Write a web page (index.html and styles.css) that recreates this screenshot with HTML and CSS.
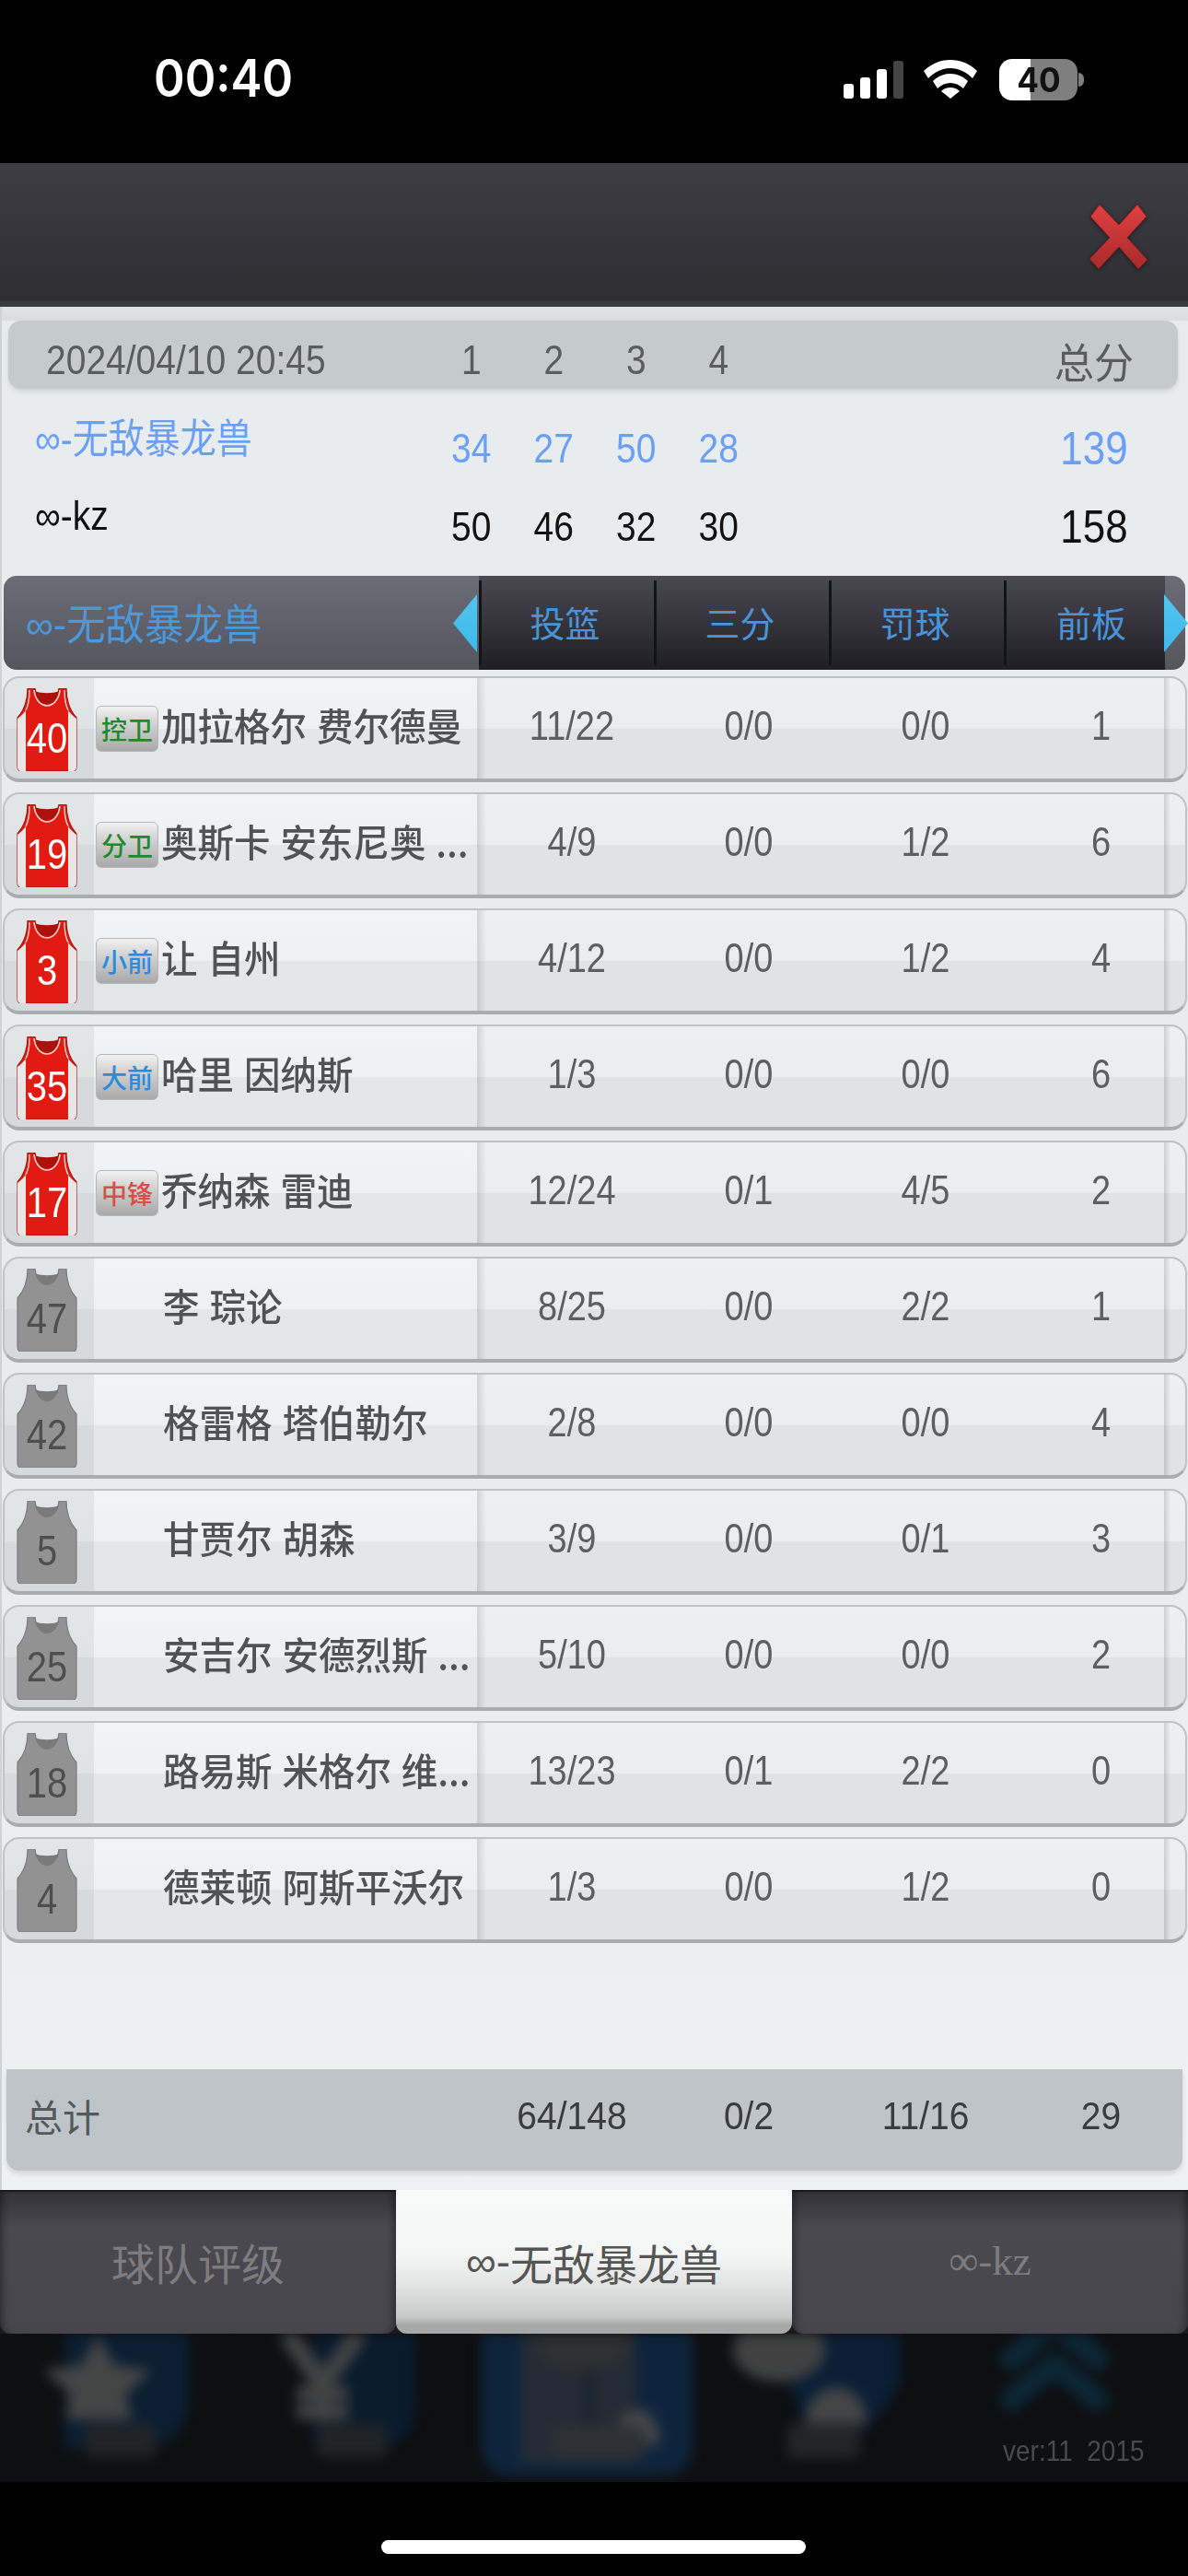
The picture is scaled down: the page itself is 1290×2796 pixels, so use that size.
FILE: index.html
```html
<!DOCTYPE html>
<html lang="zh-CN">
<head>
<meta charset="utf-8">
<title>比赛统计</title>
<link rel="stylesheet" href="styles.css">
</head>
<body>
<svg class="defs" width="0" height="0" aria-hidden="true">
  <defs>
    <symbol id="jersey-red" viewBox="0 0 66 90">
      <path d="M12 0H20C21 10 26 17 33 17C40 17 45 10 46 0H54C54 10 56 22 65 32V85Q65 90 61 90H5Q1 90 1 85V32C10 22 12 10 12 0Z" fill="#e11b12" stroke="#a81510" stroke-width="1.2"/>
      <path d="M1 33C5 30 8 27 10 24V90H5Q1 90 1 85Z M65 33C61 30 58 27 56 24V90H61Q65 90 65 85Z" fill="#e9e6e6"/>
      <path d="M20 3C21 11 26 17 33 17C40 17 45 11 46 3C40 6 26 6 20 3Z" fill="#ab120c"/>
      <path d="M19 2C20 12 26 19 33 19C40 19 46 12 47 2" fill="none" stroke="#f6d5d2" stroke-width="1.6"/>
      <path d="M14 2C14 12 12 20 10 24 M52 2C52 12 54 20 56 24" fill="none" stroke="#f6d5d2" stroke-width="1.4"/>
    </symbol>
    <symbol id="jersey-grey" viewBox="0 0 66 90">
      <path d="M12 0H20C21 10 26 17 33 17C40 17 45 10 46 0H54C54 10 56 22 65 32V85Q65 90 61 90H5Q1 90 1 85V32C10 22 12 10 12 0Z" fill="#929292" stroke="#7b7b7b" stroke-width="1.2"/>
      <path d="M20 5C22 12 27 18 33 18C39 18 44 12 46 5C40 8 26 8 20 5Z" fill="#7a7a7a"/>
    </symbol>
  </defs>
</svg>
<main class="screen">
  <header class="status">
    <span class="clock">00:40</span>
    <div class="status-icons">
      <div class="signal"><i class="b1"></i><i class="b2"></i><i class="b3"></i><i class="b4"></i></div>
      <svg class="wifi" viewBox="0 0 58 42" width="58" height="42"><path d="M0 12C8 4 18 0 29 0C40 0 50 4 58 12L53 20C46 13 38 9 29 9C20 9 12 13 5 20Z M10 23C15 18 22 15 29 15C36 15 43 18 48 23L43 31C39 27 34 25 29 25C24 25 19 27 15 31Z M19 34C22 31 25 30 29 30C33 30 36 31 39 34L29 42Z" fill="#fff"/></svg>
      <div class="battery"><span class="battery-level">40</span></div>
    </div>
  </header>

  <div class="topbar">
    <svg class="close" viewBox="0 0 63 70" width="63" height="70">
      <defs><linearGradient id="xg" x1="0" y1="0" x2="0" y2="1"><stop offset="0" stop-color="#e23f3f"/><stop offset="1" stop-color="#a82a2c"/></linearGradient></defs>
      <path d="M11 0L32 22L52 0L62 13L41 36L63 60L53 70L32 46L10 70L0 59L22 36L1 13Z" fill="url(#xg)" stroke="#7a1f20" stroke-width="1"/>
    </svg>
  </div>

  <section class="panel">
    <div class="score-head score-grid">
      <span class="tx date">2024/04/10 20:45</span>
      <span class="tx c">1</span><span class="tx c">2</span><span class="tx c">3</span><span class="tx c">4</span><span></span>
      <span class="tx c cjk sum-label">总分</span>
    </div>
    <div class="teams">
      <div class="team score-grid blue">
        <span class="tx team-name">∞-<span class="cjk">无敌暴龙兽</span></span>
        <span class="tx c">34</span><span class="tx c">27</span><span class="tx c">50</span><span class="tx c">28</span><span></span>
        <span class="tx c big">139</span>
      </div>
      <div class="team score-grid dark">
        <span class="tx team-name">∞-kz</span>
        <span class="tx c">50</span><span class="tx c">46</span><span class="tx c">32</span><span class="tx c">30</span><span></span>
        <span class="tx c big">158</span>
      </div>
    </div>

    <div class="stat-bar">
      <div class="bar-title tx">∞-<span class="cjk">无敌暴龙兽</span></div>
      <div class="bar-cols">
        <span class="bar-col cjk">投篮</span>
        <span class="bar-col cjk">三分</span>
        <span class="bar-col cjk">罚球</span>
        <span class="bar-col last cjk">前板</span>
      </div>
      <div class="bar-cap"></div>
      <i class="arrow arrow-left"></i>
      <i class="arrow arrow-right"></i>
    </div>

    <div class="players">
      <div class="player">
        <div class="shirt"><svg width="66" height="90"><use href="#jersey-red"/></svg><b class="num tx">40</b></div>
        <div class="who"><span class="badge green">控卫</span><span class="name tx">加拉格尔 费尔德曼</span></div>
        <div class="stats"><span class="tx">11/22</span><span class="tx">0/0</span><span class="tx">0/0</span><span class="tx">1</span></div>
      </div>
      <div class="player">
        <div class="shirt"><svg width="66" height="90"><use href="#jersey-red"/></svg><b class="num tx">19</b></div>
        <div class="who"><span class="badge green">分卫</span><span class="name tx">奥斯卡 安东尼奥 ...</span></div>
        <div class="stats"><span class="tx">4/9</span><span class="tx">0/0</span><span class="tx">1/2</span><span class="tx">6</span></div>
      </div>
      <div class="player">
        <div class="shirt"><svg width="66" height="90"><use href="#jersey-red"/></svg><b class="num tx">3</b></div>
        <div class="who"><span class="badge sky">小前</span><span class="name tx">让 自州</span></div>
        <div class="stats"><span class="tx">4/12</span><span class="tx">0/0</span><span class="tx">1/2</span><span class="tx">4</span></div>
      </div>
      <div class="player">
        <div class="shirt"><svg width="66" height="90"><use href="#jersey-red"/></svg><b class="num tx">35</b></div>
        <div class="who"><span class="badge sky">大前</span><span class="name tx">哈里 因纳斯</span></div>
        <div class="stats"><span class="tx">1/3</span><span class="tx">0/0</span><span class="tx">0/0</span><span class="tx">6</span></div>
      </div>
      <div class="player">
        <div class="shirt"><svg width="66" height="90"><use href="#jersey-red"/></svg><b class="num tx">17</b></div>
        <div class="who"><span class="badge red">中锋</span><span class="name tx">乔纳森 雷迪</span></div>
        <div class="stats"><span class="tx">12/24</span><span class="tx">0/1</span><span class="tx">4/5</span><span class="tx">2</span></div>
      </div>
      <div class="player bench">
        <div class="shirt"><svg width="66" height="90"><use href="#jersey-grey"/></svg><b class="num tx">47</b></div>
        <div class="who"><span class="name tx">李 琮论</span></div>
        <div class="stats"><span class="tx">8/25</span><span class="tx">0/0</span><span class="tx">2/2</span><span class="tx">1</span></div>
      </div>
      <div class="player bench">
        <div class="shirt"><svg width="66" height="90"><use href="#jersey-grey"/></svg><b class="num tx">42</b></div>
        <div class="who"><span class="name tx">格雷格 塔伯勒尔</span></div>
        <div class="stats"><span class="tx">2/8</span><span class="tx">0/0</span><span class="tx">0/0</span><span class="tx">4</span></div>
      </div>
      <div class="player bench">
        <div class="shirt"><svg width="66" height="90"><use href="#jersey-grey"/></svg><b class="num tx">5</b></div>
        <div class="who"><span class="name tx">甘贾尔 胡森</span></div>
        <div class="stats"><span class="tx">3/9</span><span class="tx">0/0</span><span class="tx">0/1</span><span class="tx">3</span></div>
      </div>
      <div class="player bench">
        <div class="shirt"><svg width="66" height="90"><use href="#jersey-grey"/></svg><b class="num tx">25</b></div>
        <div class="who"><span class="name tx">安吉尔 安德烈斯 ...</span></div>
        <div class="stats"><span class="tx">5/10</span><span class="tx">0/0</span><span class="tx">0/0</span><span class="tx">2</span></div>
      </div>
      <div class="player bench">
        <div class="shirt"><svg width="66" height="90"><use href="#jersey-grey"/></svg><b class="num tx">18</b></div>
        <div class="who"><span class="name tx">路易斯 米格尔 维...</span></div>
        <div class="stats"><span class="tx">13/23</span><span class="tx">0/1</span><span class="tx">2/2</span><span class="tx">0</span></div>
      </div>
      <div class="player bench">
        <div class="shirt"><svg width="66" height="90"><use href="#jersey-grey"/></svg><b class="num tx">4</b></div>
        <div class="who"><span class="name tx">德莱顿 阿斯平沃尔</span></div>
        <div class="stats"><span class="tx">1/3</span><span class="tx">0/0</span><span class="tx">1/2</span><span class="tx">0</span></div>
      </div>
    </div>

    <div class="totals">
      <span class="totals-label cjk">总计</span>
      <div class="stats"><span class="tx">64/148</span><span class="tx">0/2</span><span class="tx">11/16</span><span class="tx">29</span></div>
    </div>
  </section>

  <nav class="tabs">
    <div class="tab cjk">球队评级</div>
    <div class="tab active">∞-<span class="cjk">无敌暴龙兽</span></div>
    <div class="tab serif">∞-kz</div>
  </nav>

  <div class="strip">
    <svg class="strip-art" viewBox="0 0 1290 161" width="1290" height="161" aria-hidden="true">
      <path d="M70 -20H205V70Q205 120 150 125H70Z" fill="#0a2540"/>
      <path d="M106 2L125 34L165 40L137 65L143 93H72L76 65L47 40L88 34Z" fill="#5a5a5a"/>
      <rect x="93" y="98" width="76" height="36" rx="6" fill="#2a2c30"/>
      <path d="M340 -20H452V70Q452 120 410 125H340Z" fill="#082038"/>
      <path d="M312 0L350 55L390 0" fill="none" stroke="#585858" stroke-width="20"/>
      <path d="M350 50V95M322 65H378M322 85H378" fill="none" stroke="#585858" stroke-width="16"/>
      <rect x="345" y="98" width="75" height="36" rx="6" fill="#2a2c30"/>
      <rect x="523" y="-30" width="229" height="184" rx="30" fill="#0f2d4d"/>
      <rect x="566" y="-30" width="124" height="170" fill="#2f3742"/>
      <path d="M640 20V130" stroke="#1c2a3a" stroke-width="10"/>
      <path d="M585 -10H680V28Q632 50 585 28Z" fill="#3d3d40"/>
      <path d="M668 120C668 70 716 70 716 120Z" fill="#5e5e61"/>
      <rect x="600" y="100" width="100" height="36" rx="6" fill="#3b3e44"/>
      <path d="M830 -20H978V50Q960 95 900 135L870 90Z" fill="#0a2544"/>
      <ellipse cx="846" cy="18" rx="50" ry="34" fill="#555"/>
      <path d="M875 98C875 45 941 45 941 98Z" fill="#5a5a5a"/>
      <rect x="855" y="97" width="78" height="38" rx="6" fill="#2c2e33"/>
      <path d="M1090 35L1145 -12L1200 35" fill="none" stroke="#0c3146" stroke-width="24"/>
      <path d="M1090 78L1145 34L1200 78" fill="none" stroke="#0c3146" stroke-width="24"/>
    </svg>
    <span class="ver tx">ver:11&nbsp;&nbsp;2015</span>
  </div>

  <footer class="home"><i class="home-bar"></i></footer>
</main>
</body>
</html>
```
FILE: styles.css
```css
* { box-sizing: border-box; }
html, body { margin: 0; padding: 0; background: #000; }
body { width: 1290px; height: 2796px; overflow: hidden; font-family: "Liberation Sans", "Noto Sans CJK SC", sans-serif; }
.defs { position: absolute; }
.screen { display: flex; flex-direction: column; width: 1290px; height: 2796px; }
.cjk { font-family: "Noto Sans CJK SC", "Liberation Sans", sans-serif; }
.tx { display: inline-block; transform: scaleY(1.14); }

/* status bar */
.status { height: 177px; flex: none; background: #000; display: flex; justify-content: space-between; padding: 64px 120px 0 167px; color: #fff; }
.clock { font: 600 51px/48px Inter, "Liberation Sans", sans-serif; transform: scaleY(1.1); }
.status-icons { display: flex; align-items: flex-start; }
.signal { display: flex; align-items: flex-end; gap: 7px; height: 41px; margin-top: 2px; margin-right: 22px; }
.signal i { display: block; width: 11px; background: #fff; border-radius: 3px; }
.signal .b1 { height: 16px; }
.signal .b2 { height: 23px; }
.signal .b3 { height: 32px; }
.signal .b4 { height: 41px; background: #444; }
.wifi { margin-top: 1px; margin-right: 24px; }
.battery { position: relative; width: 85px; height: 45px; border-radius: 14px; background: linear-gradient(90deg, #fff 40%, #7f7f7f 40%); display: flex; align-items: center; justify-content: center; }
.battery::after { content: ""; position: absolute; right: -7px; top: 15px; width: 6px; height: 15px; border-radius: 0 6px 6px 0; background: #7f7f7f; }
.battery-level { font: 700 37px/45px Inter, "Liberation Sans", sans-serif; color: #111; transform: scaleX(.95); }

/* top bar */
.topbar { height: 156px; flex: none; display: flex; justify-content: flex-end; align-items: flex-start; padding: 45px 44px 0 0; background: linear-gradient(#3e3d45, #2f2e33 97%); border-bottom: 6px solid #393d40; }
.close { filter: drop-shadow(0 1px 2px rgba(0,0,0,.5)); }

/* panel */
.panel { height: 2044px; flex: none; display: flex; flex-direction: column; border-left: 2px solid #cfd3d4; padding-top: 15px; background: linear-gradient(#e0e4e5, #d9dddd 15px, #e8ecee 15px, #e8ecee 60%, #edf1f2); }
.score-grid { display: grid; grid-template-columns: 465px repeat(4, 89.5px) 275px 176px; align-items: center; }
.c { justify-self: center; }
.score-head { height: 74px; margin: 0 11px 0 7px; padding-top: 12px; grid-template-columns: 458px repeat(4, 89.5px) 275px 176px; background: #c5cacc; border-radius: 14px; box-shadow: 0 3px 4px rgba(0,0,0,.1); font-size: 39px; color: #5a5c5e; }
.date { padding-left: 41px; justify-self: start; }
.sum-label { font-size: 43px; line-height: 50px; transform: scaleY(1.05); }
.teams { padding-top: 22px; margin-bottom: 11px; }
.team { height: 85px; font-size: 39px; }
.team-name { font-size: 39px; padding-left: 36px; margin-bottom: 24px; justify-self: start; line-height: 44px; }
.team .cjk { font-size: 39px; }
.big { font-size: 44px; }
.blue { color: #6a9ff5; }
.dark { color: #111; }

/* stat bar */
.stat-bar { position: relative; display: flex; height: 102px; margin: 0 3px 7px 2px; flex: none; }
.bar-title { width: 516px; padding: 14px 0 0 24px; background: linear-gradient(#6c6c77, #55555e); border-radius: 14px 0 0 14px; color: #4a98dd; font-size: 42px; line-height: 72px; transform: none; }
.bar-title .cjk { display: inline-block; font-size: 42.5px; transform: scaleY(1.08); }
.bar-cols { display: flex; width: 745px; background: linear-gradient(#4a4952, #1f1e24); padding: 5px 0; }
.bar-col { display: flex; align-items: center; justify-content: center; width: 190px; padding-right: 6px; padding-bottom: 4px; border-left: 3px solid #11131b; color: #4a93d6; font-size: 38px; }
.bar-col.last { width: 175px; padding-right: 0; padding-left: 12px; }
.bar-cap { flex: 1; background: linear-gradient(#6c6c77, #55555e); border-radius: 0 14px 14px 0; }
.arrow { position: absolute; top: 20px; width: 26px; height: 63px; background: linear-gradient(#4fc6ee, #3fb8ec); }
.arrow-left { left: 488px; clip-path: polygon(100% 0, 0 50%, 100% 100%); }
.arrow-right { right: -3px; clip-path: polygon(0 0, 100% 50%, 0 100%); }

/* players */
.players { display: flex; flex-direction: column; gap: 11px; margin: 0 1px; }
.player { position: relative; display: grid; grid-template-columns: 97px 416px 769px; height: 115px; overflow: hidden; border-radius: 18px; border: solid #bfc3c4; border-width: 2px 2px 4px; border-bottom-color: #a8adaf; background: linear-gradient(#f1f4f5, #eef1f2 50%, #e4e7e9 50%, #e4e7e9); }
.player::after { content: ""; position: absolute; right: 0; top: 0; bottom: 0; width: 23px; background: linear-gradient(90deg, rgba(0,0,0,.14), rgba(0,0,0,0) 7px); }
.shirt { position: relative; display: flex; justify-content: center; padding: 11px 5px 0 0; background: rgba(0,0,0,.055); }
.shirt svg { display: block; }
.num { position: absolute; left: 0; right: 5px; top: 40px; text-align: center; font: 400 40px/50px "Liberation Sans", sans-serif; color: #fff; }
.bench .num { color: #4e4e4e; }
.who { display: flex; align-items: center; padding: 0 0 0 2px; }
.badge { flex: none; width: 68px; height: 50px; margin-top: 1px; display: flex; align-items: center; justify-content: center; border-radius: 6px; border: 1px solid #b6b8b8; background: linear-gradient(#f2f2f2, #d8d8d8 30%, #a9a9a9); font: 500 28px/1 "Noto Sans CJK SC", sans-serif; }
.green { color: #1f8a2c; }
.sky { color: #2b8be0; }
.red { color: #e24a4a; }
.name { margin-left: 3px; padding-bottom: 9px; font: 500 39.5px/50px "Noto Sans CJK SC", sans-serif; color: #505355; white-space: nowrap; word-spacing: 2px; transform: scaleY(1.05); }
.bench .name { margin-left: 73px; }
.stats { display: grid; grid-template-columns: 206px 178px 206px 175px; align-items: center; justify-items: center; padding-bottom: 4px; font-size: 38px; color: #5c5e60; background: linear-gradient(90deg, rgba(0,0,0,.13), rgba(0,0,0,.015) 10px); }
.player .stats span { transform: scaleY(1.18); }

/* totals */
.totals { display: flex; height: 110px; margin: auto 6px 21px 5px; background: #bfc4c8; border-radius: 0 0 14px 14px; box-shadow: 0 4px 5px rgba(0,0,0,.1); }
.totals-label { width: 511px; padding: 22px 0 0 20px; font-size: 41px; line-height: 56px; color: #55585a; }
.totals .stats { flex: none; grid-template-columns: 206px 178px 206px 175px; background: none; color: #3a3c3e; font-size: 39px; padding-bottom: 8px; }
.totals .tx { transform: scaleY(1.07); }

/* tabs */
.tabs { height: 156px; flex: none; display: grid; grid-template-columns: 430px 430px 430px; background: #1a1a1e; }
.tab { display: flex; align-items: center; justify-content: center; margin-top: 2px; border-radius: 0 0 12px 12px; background: linear-gradient(#333238, #4a4950 25%, #47464d); color: #7d7d80; font-size: 46px; padding-bottom: 4px; box-shadow: inset 10px 0 10px -8px rgba(0,0,0,.45), inset -10px 0 10px -8px rgba(0,0,0,.45); }
.tab.cjk { font-size: 47px; }
.tab.active { margin-top: 0; background: linear-gradient(#f8faf9, #f4f6f5 45%, #e2e4e3 66%, #c8cac9 88%, #a6a8a7 94%, #a6a8a7); color: #555; box-shadow: none; padding-top: 4px; }
.tab.serif { font-family: "Liberation Serif", serif; font-size: 45px; }

/* blurred background strip */
.strip { position: relative; height: 161px; flex: none; overflow: hidden; background: #0e0f11; }
.strip-art { display: block; filter: blur(7px); opacity: .72; }
.ver { position: absolute; left: 1089px; top: 113px; font-size: 28px; line-height: 30px; color: #4a4a4c; white-space: nowrap; transform: scaleY(1.1); }

/* home */
.home { flex: 1; padding: 63px 0 0 414px; background: #000; }
.home-bar { display: block; width: 461px; height: 15px; border-radius: 8px; background: #fff; }
```
